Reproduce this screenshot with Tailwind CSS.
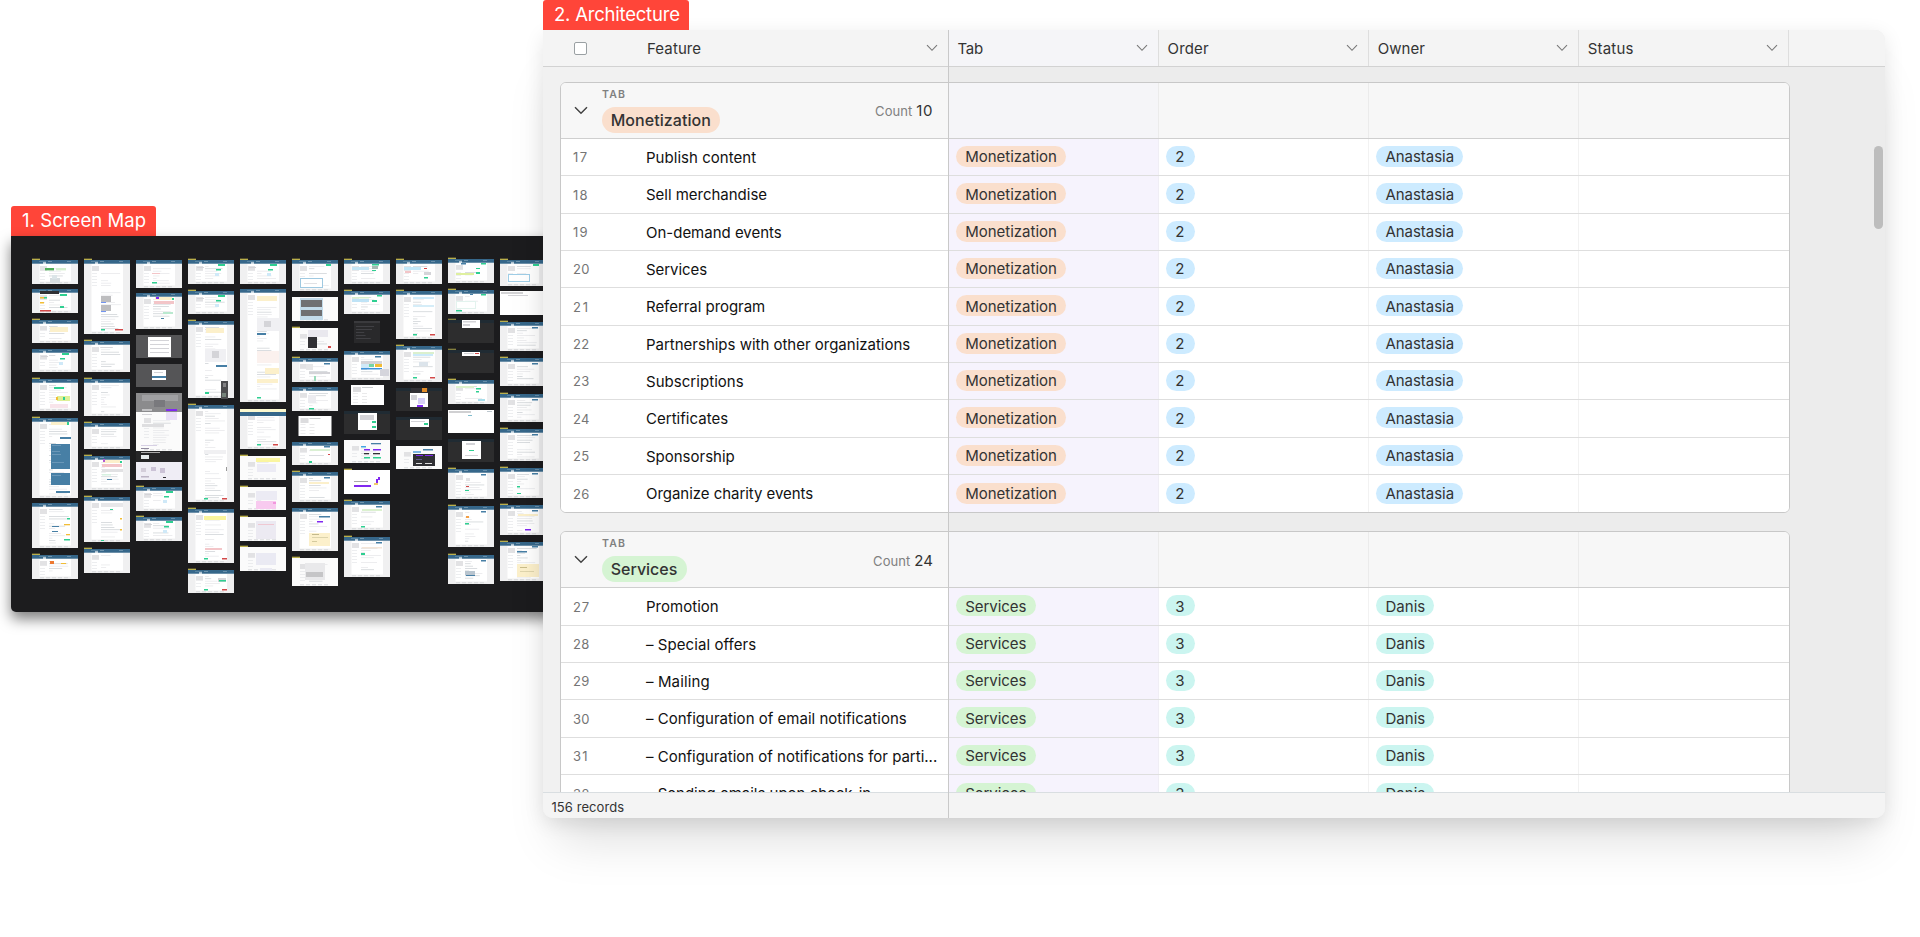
<!DOCTYPE html>
<html lang="en">
<head>
<meta charset="utf-8">
<title>Architecture</title>
<script src="https://cdn.jsdelivr.net/npm/@tailwindcss/browser@4"></script>
</head>
<body class="bg-white">
<main class="relative h-[937px] w-full overflow-hidden bg-white font-['Inter',sans-serif] text-[#333]">

  <!-- Screen map window -->
  <section class="absolute left-[11px] top-[206px] flex w-[600px] flex-col items-start">
    <h2 class="flex h-[30px] w-[145px] items-center rounded-t-[3px] bg-[#ff4539] pl-[11px] text-[18.5px] whitespace-nowrap text-white"><span data-w="123" data-f="18.5px">1. Screen Map</span></h2>
    <div class="h-[376px] w-full rounded-bl-[5px] bg-[#1c1c1e] shadow-[0_7px_14px_rgba(0,0,0,0.5)]">
      <svg id="map" class="block" width="600" height="376" viewBox="11 236 600 376"></svg>
    </div>
  </section>

  <!-- Architecture window -->
  <section class="absolute left-[543px] top-0 isolate flex w-[1342px] flex-col items-start">
    <h2 class="z-10 flex h-[30px] w-[146px] items-center rounded-t-[3px] bg-[#ff4539] pl-[11px] text-[18.5px] whitespace-nowrap text-white"><span data-w="124.5" data-f="18.5px">2. Architecture</span></h2>
    <div class="relative flex h-[788px] w-full flex-col overflow-hidden rounded-[10px] rounded-tl-none bg-[#ececec]">
      <header id="head" class="flex h-[37px] shrink-0 border-b border-[#d2d2d2] bg-[#f4f4f4] text-[15px]"></header>
      <div id="body" class="flex h-[725.5px] flex-col gap-[18px] overflow-hidden bg-[linear-gradient(90deg,#f1f1f1_405.5px,#ececec_405.5px)] pt-[15px] pl-[17px]"></div>
      <footer class="flex h-[26px] shrink-0 items-center border-t border-[#d9dee1] bg-[#f4f4f4] pt-[4px] pl-[8.5px] text-[13px]"><span data-w="71.5" data-f="13px">156 records</span></footer>
      <div class="absolute top-0 left-[405px] h-full w-px bg-[#c9c9c9]"></div>
      <div class="absolute top-[116px] right-[2px] h-[83px] w-[9px] rounded-full bg-[#bdbdbd]"></div>
    </div>
    <div class="absolute top-[30px] -z-10 h-[788px] w-full rounded-[10px] shadow-[0_36px_46px_-14px_rgba(0,0,0,0.13),0_5px_20px_rgba(0,0,0,0.1)]"></div>
  </section>
</main>

<script>
const chevron = '<svg class="shrink-0" width="12" height="8" viewBox="0 0 12 8" fill="none" stroke="#777" stroke-width="1.1"><path d="M1 1.2 6 6.3 11 1.2"/></svg>';
const cell = 'flex w-[210.1px] shrink-0 items-center';

document.getElementById('head').innerHTML =
  '<div class="flex w-[405.5px] shrink-0 items-center pr-[10.5px]">' +
  '<div class="ml-[30.5px] size-[13px] rounded-[2px] border border-[#9aa0a3] bg-white"></div>' +
  '<span class="ml-[60.5px] pt-[2px]"><span data-w="53">Feature</span></span><span class="ml-auto">' + chevron + '</span></div>' +
  [['Tab', 24.3], ['Order', 40], ['Owner', 46], ['Status', 44.6]].map(([t, w], i) =>
    '<div class="' + cell + ' justify-between border-r border-[#dedede] pr-[10px] pl-[9px]' + (i ? '' : ' bg-[#f5f5f8]') + '"><span class="pt-[2px]"><span data-w="' + w + '">' + t + '</span></span>' + chevron + '</div>').join('');

const pill = (t, w, c) => '<span class="-mt-px ml-[7.5px] flex h-[21px] items-center rounded-full px-[9.2px] pt-[2px] ' + c + '"><span data-w="' + w + '">' + t + '</span></span>';

function group(g) {
  const header = '<div class="flex h-[56px] shrink-0 border-b border-[#cfcfcf] bg-[#f7f7f7]">' +
    '<div class="flex w-[387.5px] shrink-0 items-center pr-[15.5px]">' +
    '<svg class="ml-[13px] shrink-0" width="14" height="9" viewBox="0 0 14 9" fill="none" stroke="#444" stroke-width="1.5"><path d="M1 1.2 7 7.2 13 1.2"/></svg>' +
    '<div class="ml-[13.5px] -mt-px flex flex-col items-start gap-[7px]"><span class="h-[12px] pl-[0.5px] text-[10.5px] leading-[14px] font-semibold text-[#808080]"><span data-w="23" data-f="10.5px" data-b="600">TAB</span></span>' +
    '<span class="flex h-[26px] items-center rounded-full px-[9.2px] text-[16px] font-medium ' + g.c1 + '"><span data-w="' + g.bw + '" data-f="16px" data-b="500">' + g.name + '</span></span></div>' +
    '<span class="ml-auto flex items-baseline gap-[4px] pt-[2px]"><span class="text-[13px] text-[#808080]"><span data-w="36" data-f="13px">Count</span></span><span class="text-[15px]"><span data-w="' + g.cw + '">' + g.count + '</span></span></span></div>' +
    [0, 1, 2, 3].map(i => '<div class="' + cell + ' border-[#ebebeb] ' + (i < 3 ? 'border-r' : '') + (i ? '' : ' bg-[#f5f5f8]') + '"></div>').join('') + '</div>';
  const rows = g.rows.map(([t, w], i) =>
    '<div class="flex h-[37.33px] shrink-0 text-[15px] ' + (i < g.rows.length - 1 ? 'border-b border-[#dedede]' : '') + '">' +
    '<div class="flex w-[387.5px] shrink-0 items-center bg-white pt-[2px]"><span class="ml-[12px] w-[73px] shrink-0 text-[13px] text-[#757575]"><span data-f="13px" data-w="' + (g.start + i == 31 || g.start + i < 20 ? 14.5 : 15.5) + '">' + (g.start + i) + '</span></span>' +
    '<span class="text-[#111]"><span data-w="' + w + '">' + t + '</span></span></div>' +
    '<div class="' + cell + ' border-r border-[#f0eef5] bg-[#f6f3fd]">' + pill(g.name, g.sw, g.c1) + '</div>' +
    '<div class="' + cell + ' border-r border-[#f2f2f2] bg-white">' + pill(g.order, 9, g.c2) + '</div>' +
    '<div class="' + cell + ' border-r border-[#f2f2f2] bg-white">' + pill(g.owner, g.ow, g.c2) + '</div>' +
    '<div class="' + cell + ' bg-white"></div></div>').join('');
  return '<div class="w-[1230px] shrink-0 overflow-hidden rounded-[6px] border border-[#c8c8c8] bg-white">' + header + rows + '</div>';
}

document.getElementById('body').innerHTML =
  group({ name: 'Monetization', bw: 99, sw: 90.5, count: 10, cw: 15.5, start: 17, order: 2, owner: 'Anastasia', ow: 67.5,
    c1: 'bg-[#fadfcd]', c2: 'bg-[#cdebff]',
    rows: [['Publish content', 109], ['Sell merchandise', 119.8], ['On-demand events', 134.5], ['Services', 60], ['Referral program', 118], ['Partnerships with other organizations', 263], ['Subscriptions', 96.5], ['Certificates', 81], ['Sponsorship', 87.5], ['Organize charity events', 166]] }) +
  group({ name: 'Services', bw: 65.5, sw: 60, count: 24, cw: 17.5, start: 27, order: 3, owner: 'Danis', ow: 38.7,
    c1: 'bg-[#d5f4d3]', c2: 'bg-[#cbf5f0]',
    rows: [['Promotion', 71.5], ['– Special offers', 109], ['– Mailing', 62.5], ['– Configuration of email notifications', 259.5], ['– Configuration of notifications for parti...', 290], ['– Sending emails upon check-in', 224]] });

// Tracking: spread each label over its nominal width
const pen = document.createElement('canvas').getContext('2d');
document.querySelectorAll('[data-w]').forEach(e => {
  e.classList.add('whitespace-nowrap');
  pen.font = (e.dataset.b || '400') + ' ' + (e.dataset.f || '15px') + ' Inter';
  const text = e.textContent;
  e.style.letterSpacing = ((+e.dataset.w + 1.2 - pen.measureText(text).width) / text.length).toFixed(3) + 'px';
});

// Screen thumbnails: [top, bottom, kind, extra rects as x,y,w,h,colour relative to the thumbnail]
// kinds: L labelled page, P page, B blank page, W labelled blank page, D dimmed page, E labelled dimmed page
const G = '#2fcf91', Y = '#fcf0cb', Bl = '#477fa5', R = '#d34a4a', V = '#8128f0', Or = '#f2bd35', Gy = '#d4d4d8', Pk = '#f3c5c8', Sk = '#cfe9f8', Wh = '#fff', K = '#303034';
const small = [[30, 4, 7, 2, G], [28, 9, 5, 1.5, G], [27, 13, 4, 3, Sk], [9, 7, 7, 1, Gy]];
const form = [[18, 7, 18, 5, Y]];
const columns = [
 [[260,284,'L',[[13,8,9,2.4,'#50ae59'],[24,8,10,2.4,'#d6efcf'],[18,18,10,5,'#d6dde0'],[20,15,5,4,'#dce5e8']]],[289,313,'P',[[8,2,19,3,K],[8,8,5,1.5,Or],[8,13,4,1.5,Or],[8,21,11,1.5,R],[12,8,3,1.5,G],[28,17,4,2,G],[28,5,7,2,G]]],[320,343,'L',form],[349,372,'P',small],[379,411,'L',[[22,8,10,2,G],[25,17,13,5,'#def097'],[24,18,2,3,Or],[31,18,2,3,G],[18,25,18,4,'#f8e4ea']]],[418,498,'L',[[19,4,17,3,Y],[35,4,2,3,G],[28,19,11,2,Bl],[19,26,19,25,Bl],[19,55,19,12,Bl],[24,73,14,2,Bl],[20,27,9,.5,'#8eb1ca'],[20,33,8,.5,'#8eb1ca'],[20,36,9,.5,'#8eb1ca'],[20,44,12,.5,'#8eb1ca'],[20,57,9,.5,'#8eb1ca']]],[503,548,'P',[[35,15,3,1.5,G],[32,21,6,1.3,Or],[20,23,7,1,Bl],[34,31,4,1.3,Or],[20,28,6,1,Bl],[32,36,6,1.5,G]]],[555,579,'L',[[18,6,4,3,'#ed7931'],[29,8,5,1,Or]]]],
 [[260,334,'L',[[17,36,10,6,'#bdbdbf'],[17,45,10,6,'#bdbdbf'],[17,42,5,1,'#7294f0'],[17,51,5,1,'#7294f0'],[17,69,4,1.5,G],[31,69,8,1.5,R]]],[341,372,'L',[[16,6,13,.7,Gy]]],[379,416,'L'],[423,449,'L'],[456,490,'L',[[19,4,17,3,Y],[18,8,20,3,Pk],[19,3,2,3,'#b35bd3'],[36,5,2,2,G],[18,13,21,3,'#e1e1e3'],[18,18,9,1.5,'#d6f1e0'],[23,23,5,1,Bl]]],[497,542,'L',[[36,21,2,1.5,Or],[36,32,2,1.5,Or],[26,12,3,1,G],[17,6,22,4,'#e7e7e9'],[17,43,3,1,G]]],[549,573,'L']],
 [[260,288,'P',[[16,13,8,1,Pk],[16,22,5,1.5,G]]],[293,329,'P',[[19,4,17,3,Y],[18,8,20,3,Pk],[20,4,3,2,V],[36,5,2,2,G],[27,19,10,2,'#bae9cf'],[25,25,3,1,Bl]]],[335,358,'D',[[12,2,23,20,Wh],[14,5,19,1,Gy],[14,9,19,1,Gy],[14,13,19,1,Gy],[14,17,19,1,Gy]]],[364,387,'D',[[16,6,14,10,Wh],[18,8,9,1,Gy],[16,12,14,2,Bl]]],[393,412,'D',[[0,0,46,20,'#8b8b8d'],[6,2,36,6,'#a0a0a3'],[18,7,11,7,'#79797d'],[30,16,11,2,V],[6,16,10,2,'#c3c3c5']]],[412,451,'B',[[30,0,11,8,'#e9e0f7'],[6,2,10,1,Gy],[6,12,22,3,'#dedee0'],[5,33,16,1,'#d7d0e4'],[5,36,8,1,'#918a9f']]],[451,462,'D',[[0,0,46,11,'#262628'],[5,1,19,1,'#aaa'],[5,4,8,4,'#e7eced']]],[462,480,'B',[[0,0,46,18,'#efedf5'],[5,6,5,4,'#d4ceda'],[15,5,5,4,'#cbc2d6'],[24,6,5,5,'#cbc2d6'],[5,14,8,1.5,'#bcb4c5'],[27,15,3,1,K]]],[487,511,'L',small],[517,541,'L',small]],
 [[260,284,'L',small],[291,314,'L',small],[321,398,'L',[...form,[17,28,21,13,'#f0f0f3'],[24,30,7,7,Gy],[28,44,11,2,Bl],[17,71,4,2,G],[33,60,7,18,'#4c4c4e'],[35,62,3,4,'#828284'],[34,72,4,4,'#75837a']]],[405,502,'L',[[16,93,4,1.5,G],[34,93,5,1.5,R],[16,45,22,4,'#f0f0f2'],[38,62,1,4,'#999']]],[509,563,'L',[[16,7,22,4,'#faf49c'],[17,39,17,2,Pk],[16,49,4,1.5,G],[34,49,5,1.5,R]]],[570,593,'L',[[30,8,8,4,Gy],[31,10,7,1.5,G],[16,19,4,1.5,G],[34,19,5,1.5,R]]]],
 [[260,284,'L',small],[289,402,'P',[[17,7,20,5,Y],[17,29,23,13,'#f0f0f3'],[24,32,7,6,Gy],[17,44,9,2,Bl],[17,62,22,12,'#fbf1ee'],[25,79,14,6,Y],[17,90,21,4,Y],[17,108,4,1.5,G]]],[409,449,'P',[[0,0,46,3,'#fbf8cf'],[0,3,46,4,'#36678a'],[17,35,4,1.5,G],[33,35,5,1.5,R]]],[456,480,'W',[[16,2,24,4,'#faf5a0'],[17,8,19,8,'#ecebf4']]],[487,510,'W',[[16,4,21,9,'#ecebf4'],[16,14,20,8,'#f8caef'],[33,15,3,2,'#f297dd']]],[517,541,'W',[[16,4,20,18,'#eceaf2'],[18,7,16,1,'#efc8d2']]],[547,571,'W',[[16,6,20,12,'#eaeaf3'],[20,21,12,3,'#eaeaf3']]]],
 [[260,291,'L',[[34,4,5,2,G],[8,18,23,10,'#9fc9e1'],[9,19,21,8,'#fff'],[12,23,13,.7,Gy]]],[297,321,'B',[[8,1,23,22,'#c3dbea'],[9,3,21,7,'#707072'],[9,13,21,6,'#707072']]],[328,351,'W',[[16,2,20,7,'#e9e8ee'],[16,9,9,11,K],[36,18,3,2,R]]],[358,382,'L',[[32,5,6,1.5,Bl],[14,6,7,6,'#e7e7e8'],[17,14,21,2,Gy],[22,18,2,5,'#98dab8']]],[387,411,'P',[[16,8,8,8,'#ececf0'],[17,21,5,1.5,G]]],[416,436,'S'],[442,465,'P',[[32,4,6,1.5,Bl],[18,7,20,2,'#daf0d3'],[17,19,3,2,G],[36,12,2,1,R]]],[472,502,'L',[[17,10,20,2,Y],[32,5,6,1.5,Bl]]],[508,551,'P',[[25,13,6,1.5,V],[27,8,11,1.5,Bl],[17,25,21,13,Y],[20,26,7,1,'#c3b98c'],[20,29,16,.7,'#d0c79f'],[20,33,5,.7,'#c3b98c']]],[558,586,'W',[[13,5,20,17,'#e9e9eb'],[14,14,17,5,'#c5c5c7']]]],
 [[260,284,'L',[[8,7,17,3,'#c4e5f5'],[28,4,7,1.5,G],[28,10,4,1,G],[28,6,6,3,'#a5b9b4']]],[291,314,'L',[[8,6,17,1.5,'#d7f0cd'],[8,8,17,3,'#bfe3f6'],[33,4,5,1.5,G],[28,9,5,2,G]]],[321,343,'T'],[351,380,'P',[[17,10,21,3,Gy],[17,13,8,4,Sk],[25,13,5,3,'#74d5a5'],[31,13,7,3,Or],[17,17,21,1.5,'#3f93db'],[36,18,9,7,'#d5d5dc'],[31,5,6,1.5,Bl]]],[385,405,'S'],[411,434,'D',[[14,2,19,17,Wh],[16,4,14,5,Gy],[28,10,4,2,G],[28,15,4,2,G]]],[440,463,'B',[[27,3,10,1.3,Bl],[17,6,5,1.5,'#43a6e1'],[20,9,6,1.5,V],[29,9,8,1.5,V],[20,13,5,1.3,K],[29,13,7,1.3,K],[20,17,6,1.5,G],[29,17,8,1.5,G]]],[470,494,'W',[[0,0,46,24,'#fff'],[10,11,14,1,'#aaa'],[10,15,17,2,V],[34,7,2,3,V],[32,9,2,4,V],[30,13,4,2,'#f3cb69']]],[501,530,'L',[[18,8,20,2,'#dbf1cf'],[17,25,4,1.5,G],[32,5,6,1.5,Bl]]],[537,577,'L',[[17,16,4,2,G],[32,5,6,1.5,Bl],[18,10,20,1.5,'#f4e6d8']]]],
 [[260,284,'L',[[8,7,17,3,'#c2e7f8'],[28,8,3,1,R],[28,17,4,1.5,G],[28,12,7,3,Gy],[9,11,6,2,Pk]]],[291,339,'L',[[17,6,21,2,'#cdeafa'],[17,14,21,2,'#d5edf8'],[17,43,4,1.5,G],[34,43,5,1.5,R]]],[346,382,'L',[[17,6,21,2,'#dbf0cd'],[17,8,20,2,'#cceafa'],[23,16,9,4,'#dce4eb'],[17,31,4,1.5,G],[34,31,5,1.5,R]]],[388,411,'D',[[15,0,17,5,K],[26,0,5,4,'#e28c28'],[14,5,18,14,Wh],[15,7,6,5,Gy],[22,10,7,6,'#d6d0f5'],[21,17,6,2,V]]],[417,440,'D',[[14,2,19,8,Wh],[15,4,14,1,Gy],[28,6,4,2,G]]],[446,469,'B',[[27,3,10,1.5,Bl],[17,5,8,2,'#7db6e2'],[17,8,22,12,K],[20,9,7,1,V],[29,9,8,1,V],[20,13,6,1,'#63578b'],[20,17,6,1,'#ddd'],[29,17,7,1,'#ddd']]]],
 [[259,283,'L',[[13,4,5,1.5,Bl],[33,4,5,1.5,G],[8,14,18,2,'#dff09f'],[28,9,4,1,G],[28,13,4,2,G]]],[290,314,'L',[[8,11,20,8,'#e3f3ee'],[9,12,18,6,'#fff'],[8,20,6,1.5,G],[33,4,5,1.5,G],[22,4,3,1,Bl]]],[320,343,'E',[[14,0,18,8,Wh],[15,1,13,1.5,Gy],[15,4,7,2,Gy]]],[350,373,'E',[[14,2,18,4,Wh],[16,3,10,1,Gy],[27,3,4,1,R]]],[380,404,'L',[[8,6,18,2,'#dcf2cc'],[28,8,5,1.5,G],[30,19,7,2,'#a8deeb'],[28,11,3,1.5,G]]],[410,433,'B',[[0,0,46,23,'#fff'],[1,1,22,2,'#d0d0d2'],[39,1,5,1,'#bdc7ce'],[20,5,4,1,'#81bccd']]],[439,462,'D',[[14,2,19,18,Wh],[18,4,9,2,Gy],[21,11,5,1,G],[17,16,13,1,Gy]]],[469,499,'L',[[18,17,3,1,R],[17,21,4,1,G],[33,5,5,1.5,Bl],[18,9,4,3,'#e2e2e4']]],[506,547,'L',[[18,10,3,2,'#f39e45'],[17,17,4,1.5,G],[33,5,5,1.5,Bl]]],[555,584,'L',[[17,16,10,4,'#b9c5cf'],[18,20,9,1,Bl],[33,5,5,1.5,Bl]]]],
 [[260,286,'L',[[33,4,6,2,G],[8,14,22,8,'#9fcee7'],[9,15,20,6,'#fff']]],[291,315,'B',[[0,0,46,24,'#fff'],[1,1,22,2,'#d3d3d5'],[8,4,20,1,Gy]]],[322,351,'L',[[32,5,6,1.5,Bl]]],[358,386,'L',[[32,5,6,1.5,Bl]]],[394,422,'L',[[32,5,6,1.5,Bl]]],[429,461,'L',[[32,5,6,1.5,Bl]]],[468,498,'L',[[17,18,3,1.5,G],[17,25,4,1,G],[32,5,6,1.5,Bl]]],[505,535,'L',[[18,9,20,2,Y],[25,24,6,1.5,V],[32,5,6,1.5,Bl]]],[542,581,'L',[[17,9,10,1.5,Bl],[17,22,22,13,Y],[20,25,7,1,'#cbbe8b'],[20,29,14,.7,'#d5caa2'],[32,4,6,1.5,Bl]]]]
];
let out = '';
const rect = (x, y, w, h, f) => { out += '<rect x="' + x + '" y="' + y + '" width="' + w + '" height="' + h + '" fill="' + f + '"/>'; };
let seed = 7;
const rnd = () => (seed = (seed * 16807) % 2147483647) / 2147483647;
columns.forEach((col, ci) => {
  const x = 32 + ci * 52;
  col.forEach(([t, b, k, ex = []]) => {
    const h = b - t;
    if (k === 'S') {
      const sx = ci === 5 ? x + 6.5 : x + 7;
      rect(sx, t, 33, h, '#fff'); rect(sx + 2, t + 2, 8, 5, '#dcdcde');
      for (let y = 8; y < h - 2; y += 3) { rect(sx + 2, t + y, 5, .6, '#e2e2e4'); rect(sx + 11, t + y, 5, .6, '#dcdcde'); }
      rect(sx + 11, t + 2, 11, .8, '#bfc2c5'); return;
    }
    if (k === 'T') {
      rect(x + 10, t, 26, h, '#29292b'); rect(x + 10, t, 26, 2, '#3a3a3d');
      for (let y = 5; y < h - 3; y += 3) rect(x + 12, t + y, 8 + rnd() * 12, .7, '#4b4b50'); return;
    }
    const dim = k === 'D' || k === 'E', blank = k === 'B' || k === 'W';
    if ('LWE'.includes(k)) rect(x, t - 1.3, 8, 1.2, dim ? '#918b43' : '#ccc052');
    rect(x, t, 46, h, dim ? (ci > 5 ? '#2d2d2e' : '#555557') : blank ? '#fbfbfb' : '#f0f0f1');
    if (dim) {
      if (ci > 5) rect(x, t, 46, 3, '#202b33');
    } else {
      if (!blank) {
        rect(x + 7.5, t + 4, 31.5, Math.max(0, h - 6.5), '#fff');
        rect(x, t, 46, 3.7, '#36678a');
        rect(x + 7, t + 1.1, 7, .7, '#6890aa'); rect(x + 16, t + 1, 4, .8, '#7fa0b6'); rect(x + 35, t + 1, 4, .7, '#7fa0b6');
        rect(x + 11, t + 2.3, 3, 1.6, '#dfe9ef');
      }
      rect(x + 8, t + 6, 7, Math.min(5, h / 5), '#e2e2e4');
      for (let y = 13; y < Math.min(h - 4, 26); y += 3) rect(x + 8, t + y, 5, .6, '#e2e3e6');
      for (let y = 6; y < h - 4; y += 2.4) if (rnd() > .25) rect(x + 17, t + y, (3 + rnd() * 17).toFixed(1), .7, rnd() > .7 ? '#cbcfd3' : '#e5e6e9');
      for (let i = 0; i < 5; i++) rect(x + 8 + i * 6, t + h - 1.5, 4, .7, '#c9ccd0');
    }
    ex.forEach(e => rect(x + e[0], t + e[1], e[2], e[3], e[4]));
  });
});
document.getElementById('map').innerHTML = out;
</script>
</body>
</html>
